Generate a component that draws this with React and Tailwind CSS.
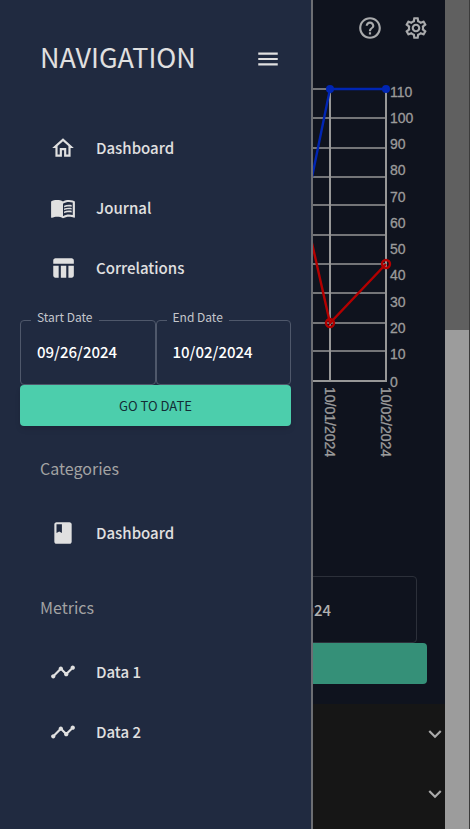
import {
  MdOutlineHome, MdMenuBook, MdTableChart, MdClass, MdTimeline, MdMenu,
  MdHelpOutline, MdOutlineSettings, MdExpandMore,
} from "react-icons/md";

const primaryLinks = [
  { label: "Dashboard", Icon: MdOutlineHome },
  { label: "Journal", Icon: MdMenuBook },
  { label: "Correlations", Icon: MdTableChart },
];
const categories = [{ label: "Dashboard", Icon: MdClass }];
const metrics = [
  { label: "Data 1", Icon: MdTimeline },
  { label: "Data 2", Icon: MdTimeline },
];

function NavList({ items }) {
  return (
    <ul>
      {items.map(({ label, Icon }) => (
        <li key={label}>
          <a href="#" className="flex h-[60px] items-center gap-5 pl-[30px] text-[15px] leading-6 font-medium text-[#e0e0e0]">
            <Icon size={26} />
            {label}
          </a>
        </li>
      ))}
    </ul>
  );
}

function DateField({ id, label, value }) {
  return (
    <fieldset className="min-w-0 flex-1 rounded border border-[#4f586b] pb-px">
      <legend className="ml-[10px] px-[6px] pb-[6px] text-[12px] leading-[14px] text-[#c4c6cc]">
        <label htmlFor={id}>{label}</label>
      </legend>
      <input id={id} defaultValue={value} className="block h-[53px] w-full bg-transparent px-4 pb-[10px] text-[15px] leading-6 font-medium text-white outline-none" />
    </fieldset>
  );
}

function Chart() {
  const rows = [89, 118, 148, 177, 205, 235, 264, 293, 323, 351];
  const labels = [
    [110, 97], [100, 123], [90, 149], [80, 175], [70, 202], [60, 228],
    [50, 254], [40, 280], [30, 307], [20, 333], [10, 359], [0, 387],
  ];
  return (
    <svg width="165" height="420" viewBox="280 56 165 420" className="block" role="img" aria-label="Metric values by date">
      <g stroke="#979797" fill="none">
        {rows.map((y) => <path key={y} d={`M280 ${y}H386`} strokeWidth="1.4" />)}
        <path d="M330 89V381M386 89V381M280 381H387" strokeWidth="2" />
      </g>
      <g className="font-['Liberation_Sans',sans-serif] text-[14px]" fill="#9b9b9b" stroke="#9b9b9b" strokeWidth="0.3">
        {labels.map(([n, y]) => <text key={n} x="390" y={y}>{n}</text>)}
        <text transform="translate(325 387) rotate(90)">10/01/2024</text>
        <text transform="translate(381 387) rotate(90)">10/02/2024</text>
      </g>
      <path d="M300 236L330 89H386" fill="none" stroke="#0025b3" strokeWidth="2.4" />
      <circle cx="330" cy="89" r="4" fill="#0025b3" />
      <circle cx="386" cy="89" r="4" fill="#0025b3" />
      <g fill="none" stroke="#b30000" strokeWidth="2.4">
        <path d="M300 190L330 323L386 264" />
        <circle cx="330" cy="323" r="4" />
        <circle cx="386" cy="264" r="4" />
      </g>
    </svg>
  );
}

export default function App() {
  return (
    <div className="flex min-h-screen bg-[#3b3b3b] font-['Noto_Sans_CJK_SC',sans-serif]">
      <main className="flex min-w-0 flex-1 flex-col bg-[#0f131e]">
        <header className="flex h-14 items-center justify-end gap-5 pr-4 text-[#a9aaac]">
          <button aria-label="Help"><MdHelpOutline size={26} /></button>
          <button aria-label="Settings"><MdOutlineSettings size={26} /></button>
        </header>
        <div className="flex justify-end"><Chart /></div>
        <section className="mt-[100px] pr-[18px] pb-5">
          <div className="pr-[10px]">
            <input aria-label="Date" defaultValue="10/02/2024" className="block h-[67px] w-full rounded border border-[#2c303a] bg-transparent pr-[85px] text-right text-[15px] font-medium text-[#b0b0b0]" />
          </div>
          <button aria-label="Go to date" className="block h-[41px] w-full rounded bg-[#359078]" />
        </section>
        <section className="flex-1 bg-[#161616]">
          {["First", "Second"].map((name) => (
            <button key={name} aria-label={`${name} section`} className="flex h-[60px] w-full items-center justify-end text-[#aaaaaa]">
              <MdExpandMore size={26} className="-mr-[3px]" />
            </button>
          ))}
        </section>
      </main>
      <div className="mr-px w-6 bg-[#9c9c9c]"><div className="h-[330px] bg-[#606060]" /></div>

      <aside className="fixed inset-y-0 left-0 w-[313px] border-r-2 border-[#6c6e73] bg-[#202a40] px-5 pt-[29px]">
        <div className="flex h-[60px] items-center justify-between pr-[10px] pl-5 text-[#e0e0e0]">
          <h1 className="pb-1 text-[27px] leading-9">NAVIGATION</h1>
          <button aria-label="Close menu"><MdMenu size={26} /></button>
        </div>
        <nav className="pt-[29px]">
          <NavList items={primaryLinks} />
        </nav>
        <form className="pt-3">
          <div className="flex">
            <DateField id="start" label="Start Date" value="09/26/2024" />
            <DateField id="end" label="End Date" value="10/02/2024" />
          </div>
          <button type="button" className="block h-[41px] w-full rounded bg-[#4cceac] text-[13px] leading-6 text-[#132c35] shadow-md">GO TO DATE</button>
        </form>
        <h2 className="mt-[30px] pl-5 text-[16px] leading-6 text-[#a3a3a3]">Categories</h2>
        <nav className="pt-[23px]"><NavList items={categories} /></nav>
        <h2 className="mt-8 pl-5 text-[16px] leading-6 text-[#a3a3a3]">Metrics</h2>
        <nav className="pt-[23px]"><NavList items={metrics} /></nav>
      </aside>
    </div>
  );
}
